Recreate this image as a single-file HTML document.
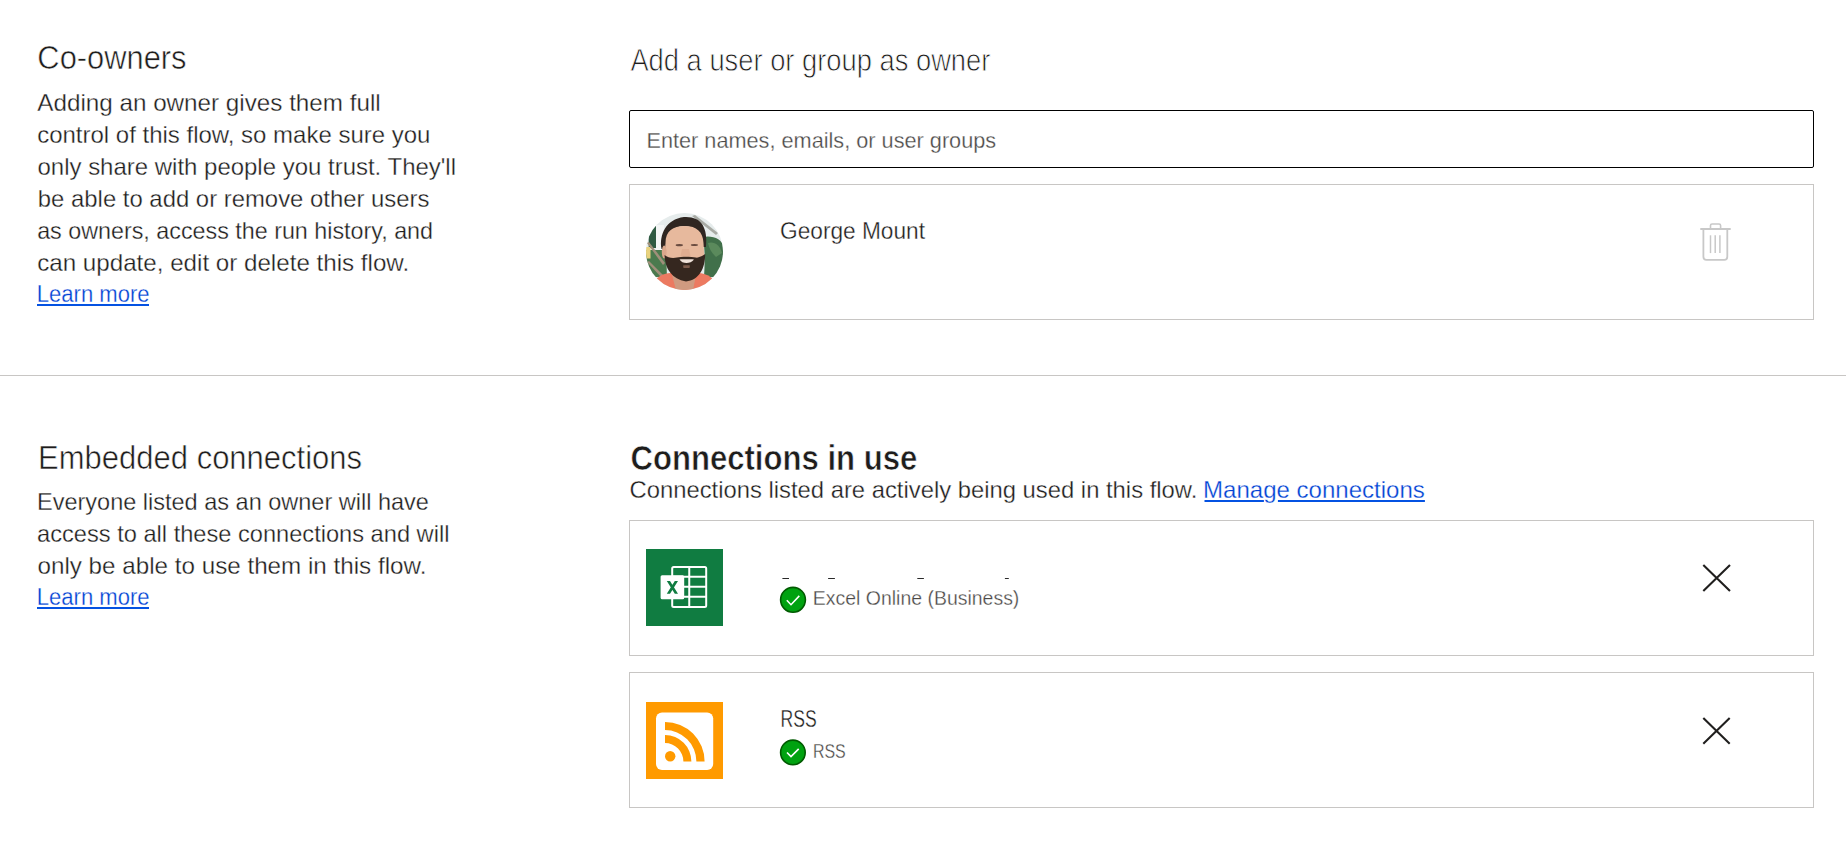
<!DOCTYPE html>
<html>
<head>
<meta charset="utf-8">
<style>
html,body{margin:0;padding:0;background:#ffffff;width:1846px;height:866px;overflow:hidden;}
body{position:relative;font-family:"Liberation Sans",sans-serif;}
.box{position:absolute;box-sizing:border-box;}
.sep{position:absolute;left:0;top:375px;width:1846px;height:1px;background:#c8c6c4;}
.input{left:629px;top:110px;width:1185px;height:58px;border:1px solid #000;border-radius:2px;}
.card{left:629px;width:1185px;height:136px;border:1px solid #c8c6c4;}
svg.layer{position:absolute;left:0;top:0;}
svg text{font-family:"Liberation Sans",sans-serif;white-space:pre;}
</style>
</head>
<body>
<div class="sep"></div>
<div class="box input"></div>
<div class="box card" style="top:184px"></div>
<div class="box card" style="top:520px"></div>
<div class="box card" style="top:672px"></div>
<svg class="layer" width="1846" height="866" viewBox="0 0 1846 866">
<defs>
<clipPath id="avc"><circle cx="38.5" cy="38.5" r="38.5"/></clipPath>
</defs>
<!-- avatar -->
<g transform="translate(646,213)">
<g clip-path="url(#avc)">
<rect x="0" y="0" width="77" height="77" fill="#e6ecec"/>
<rect x="2.7" y="13" width="8" height="22" fill="#2f5a42"/>
<rect x="10" y="12" width="8" height="26" fill="#f4f6f6"/>
<path d="M0,37 L20,37 L21,64 L8,64 L0,58 Z" fill="#4b7a4e"/>
<path d="M57,24 C66,22 77,26 77,34 L77,64 L58,64 C59,50 59,36 57,24 Z" fill="#41704a"/>
<path d="M62,30 C68,28 74,32 76,40 L70,44 C66,40 63,36 62,30 Z" fill="#5b8a5c"/>
<rect x="0" y="34" width="4.5" height="11.5" fill="#e9d27e"/>
<path d="M1,30 L3,29 L19,50 L17,52 Z" fill="#a08f7a"/>
<path d="M1,49 L3,48 L17,62 L15,64 Z" fill="#a08f7a"/>
<path d="M46,3 L49,2 L72,20 L70,22 Z" fill="#8d8f86" opacity="0.7"/>
<path d="M10,66 C14,62 20,60 24,60 L54,60 C60,61 64,63 67,66 L77,77 L0,77 Z" fill="#ec7a61"/>
<path d="M26,62 L50,62 L47,77 L30,77 Z" fill="#cf9a80"/>
<path d="M15.5,36 C13,22 20,6 38,4 C55,3 62,14 60,34 L56,34 C56,22 50,13 38,13 C26,13 20,22 19.5,36 Z" fill="#2f2621"/>
<path d="M19.5,30 C19.5,18 27,13 38.5,13 C51,13 57,19 57.5,30 L58.5,46 L19,46 Z" fill="#e7b99d"/>
<ellipse cx="18.2" cy="39" rx="2.4" ry="6.5" fill="#dba88c"/>
<path d="M36,36 L43,36 L44.5,43 L34.5,43 Z" fill="#dfad91"/>
<ellipse cx="33.3" cy="32.2" rx="3.6" ry="1.1" fill="#6a4c40"/>
<ellipse cx="48.4" cy="32" rx="3.6" ry="1.1" fill="#6a4c40"/>
<path d="M18.5,42 C19,56 26,66 40,68.5 C53,67 59,56 59.2,41 L56,43 C54,44 51,45 49.8,44.5 C45,43.5 35,43.5 31,44.5 C27,45.5 22,45 18.5,42 Z" fill="#35271f"/>
<path d="M33.5,46.5 C37,46.3 44,46.3 48,46.5 C46.5,49 43,50 40.5,50 C37.5,50 35,49 33.5,46.5 Z" fill="#efe2da"/>
<path d="M37,52.5 C39,52 42,52 44,52.5 L43.5,55 L37.5,55 Z" fill="#7d5c4c"/>
</g>
</g>
<!-- trash -->
<g fill="none" stroke="#c8c8c8" stroke-linecap="butt">
<line x1="1700.3" y1="229" x2="1730.7" y2="229" stroke-width="2"/>
<path d="M1710.5,229 V225.6 Q1710.5,224 1712.1,224 H1719 Q1720.6,224 1720.6,225.6 V229" stroke-width="1.6"/>
<path d="M1703.4,229 V256.8 Q1703.4,259.9 1706.5,259.9 H1724.2 Q1727.3,259.9 1727.3,256.8 V229" stroke-width="1.8"/>
<line x1="1710.5" y1="235.3" x2="1710.5" y2="253.1" stroke-width="1.5"/>
<line x1="1715.2" y1="235.3" x2="1715.2" y2="253.1" stroke-width="1.5"/>
<line x1="1719.9" y1="235.3" x2="1719.9" y2="253.1" stroke-width="1.5"/>
</g>
<!-- excel -->
<rect x="646" y="549" width="77" height="77" fill="#107c41"/>
<g fill="none" stroke="#ffffff" stroke-width="2">
<rect x="672.2" y="567" width="34" height="39.9" rx="1.5"/>
<line x1="689.25" y1="567" x2="689.25" y2="607"/>
<line x1="672" y1="576.8" x2="706" y2="576.8"/>
<line x1="672" y1="586.8" x2="706" y2="586.8"/>
<line x1="672" y1="596.8" x2="706" y2="596.8"/>
</g>
<rect x="660.6" y="575.2" width="23.6" height="24" rx="1.5" fill="#ffffff"/>
<path d="M666.8,581 L670,581 L678,593.7 L674.8,593.7 Z M674.8,581 L678,581 L670,593.7 L666.8,593.7 Z" fill="#107c41"/>
<!-- rss -->
<rect x="646" y="702" width="77" height="77" fill="#ff9a00"/>
<rect x="656" y="712.6" width="57.2" height="57.5" rx="6" fill="#ffffff"/>
<circle cx="670.2" cy="756.3" r="5.2" fill="#ff9a00"/>
<path d="M665,735.1 A26.4,26.4 0 0 1 691.4,761.5 L683.4,761.5 A18.4,18.4 0 0 0 665,743.1 Z" fill="#ff9a00"/>
<path d="M665,721.9 A39.6,39.6 0 0 1 704.6,761.5 L696.4,761.5 A31.4,31.4 0 0 0 665,730.1 Z" fill="#ff9a00"/>
<!-- checks -->
<circle cx="793" cy="599.8" r="12.4" fill="#00a210" stroke="#005a00" stroke-width="1.6"/>
<polyline points="786.8,600.2 791,604.7 799.3,595.9" fill="none" stroke="#ffffff" stroke-width="1.6"/>
<circle cx="792.9" cy="752.4" r="12.3" fill="#00a210" stroke="#005a00" stroke-width="1.6"/>
<polyline points="787,752.5 791,756.6 798.7,748.9" fill="none" stroke="#ffffff" stroke-width="1.6"/>
<!-- x icons -->
<g stroke="#201f1e" stroke-width="2.1" fill="none">
<path d="M1703.3,564.9 L1730,590.9 M1730,564.9 L1703.3,590.9"/>
<path d="M1703.3,718 L1729.7,743.7 M1729.7,718 L1703.3,743.7"/>
</g>
<!-- clipped text remnants -->
<g fill="#2a2a2a">
<rect x="782.4" y="578" width="6.6" height="1"/>
<rect x="828.1" y="578" width="6.8" height="1"/>
<rect x="917.3" y="578" width="6.6" height="1"/>
<rect x="1004.9" y="578" width="3.9" height="1"/>
</g>
<!-- texts -->
<text x="37.37" y="68.6" font-size="33" font-weight="400" fill="#1e1d1c" stroke="#fff" stroke-width="0.55" textLength="149.16" lengthAdjust="spacingAndGlyphs">Co-owners</text>
<text x="37.30" y="111" font-size="24" font-weight="400" fill="#1e1d1c" stroke="#fff" stroke-width="0.3" textLength="343.41" lengthAdjust="spacingAndGlyphs">Adding an owner gives them full</text>
<text x="37.20" y="143" font-size="24" font-weight="400" fill="#1e1d1c" stroke="#fff" stroke-width="0.3" textLength="393.21" lengthAdjust="spacingAndGlyphs">control of this flow, so make sure you</text>
<text x="37.50" y="175" font-size="24" font-weight="400" fill="#1e1d1c" stroke="#fff" stroke-width="0.3" textLength="418.53" lengthAdjust="spacingAndGlyphs">only share with people you trust. They&#39;ll</text>
<text x="37.85" y="207" font-size="24" font-weight="400" fill="#1e1d1c" stroke="#fff" stroke-width="0.3" textLength="391.60" lengthAdjust="spacingAndGlyphs">be able to add or remove other users</text>
<text x="37.13" y="239" font-size="24" font-weight="400" fill="#1e1d1c" stroke="#fff" stroke-width="0.3" textLength="395.91" lengthAdjust="spacingAndGlyphs">as owners, access the run history, and</text>
<text x="37.19" y="271" font-size="24" font-weight="400" fill="#1e1d1c" stroke="#fff" stroke-width="0.3" textLength="371.99" lengthAdjust="spacingAndGlyphs">can update, edit or delete this flow.</text>
<text x="36.82" y="301.9" font-size="23.5" font-weight="400" fill="#0042d4" stroke="#fff" stroke-width="0.3" textLength="112.79" lengthAdjust="spacingAndGlyphs">Learn more</text>
<rect x="37.0" y="304" width="112.0" height="2" fill="#0452e2"/>
<text x="38.12" y="468.8" font-size="33" font-weight="400" fill="#1e1d1c" stroke="#fff" stroke-width="0.55" textLength="323.93" lengthAdjust="spacingAndGlyphs">Embedded connections</text>
<text x="37.04" y="509.7" font-size="24" font-weight="400" fill="#1e1d1c" stroke="#fff" stroke-width="0.3" textLength="391.85" lengthAdjust="spacingAndGlyphs">Everyone listed as an owner will have</text>
<text x="37.12" y="541.7" font-size="24" font-weight="400" fill="#1e1d1c" stroke="#fff" stroke-width="0.3" textLength="412.28" lengthAdjust="spacingAndGlyphs">access to all these connections and will</text>
<text x="37.49" y="573.7" font-size="24" font-weight="400" fill="#1e1d1c" stroke="#fff" stroke-width="0.3" textLength="388.88" lengthAdjust="spacingAndGlyphs">only be able to use them in this flow.</text>
<text x="36.82" y="604.9" font-size="23.5" font-weight="400" fill="#0042d4" stroke="#fff" stroke-width="0.3" textLength="112.79" lengthAdjust="spacingAndGlyphs">Learn more</text>
<rect x="37.0" y="607" width="112.0" height="2" fill="#0452e2"/>
<text x="630.40" y="70.9" font-size="31" font-weight="400" fill="#1e1d1c" stroke="#fff" stroke-width="0.8" textLength="359.96" lengthAdjust="spacingAndGlyphs">Add a user or group as owner</text>
<text x="646.48" y="147.9" font-size="22.6" font-weight="400" fill="#4a4846" stroke="#fff" stroke-width="0.3" textLength="349.69" lengthAdjust="spacingAndGlyphs">Enter names, emails, or user groups</text>
<text x="780.01" y="238.7" font-size="23" font-weight="400" fill="#1e1d1c" stroke="#fff" stroke-width="0.3" textLength="145.02" lengthAdjust="spacingAndGlyphs">George Mount</text>
<text x="630.42" y="469.8" font-size="35.5" font-weight="700" fill="#1e1d1c" stroke="#fff" stroke-width="0.6" textLength="286.95" lengthAdjust="spacingAndGlyphs">Connections in use</text>
<text x="629.51" y="497.7" font-size="24" font-weight="400" fill="#1e1d1c" stroke="#fff" stroke-width="0.3" textLength="567.81" lengthAdjust="spacingAndGlyphs">Connections listed are actively being used in this flow.</text>
<text x="1203.00" y="497.7" font-size="24" font-weight="400" fill="#0042d4" stroke="#fff" stroke-width="0.3" textLength="221.89" lengthAdjust="spacingAndGlyphs">Manage connections</text>
<rect x="1204.5" y="500" width="59.4" height="2" fill="#0452e2"/>
<rect x="1277.9" y="500" width="147.0" height="2" fill="#0452e2"/>
<text x="812.87" y="604.7" font-size="21" font-weight="400" fill="#4a4846" stroke="#fff" stroke-width="0.3" textLength="206.48" lengthAdjust="spacingAndGlyphs">Excel Online (Business)</text>
<text x="780.57" y="726.7" font-size="23" font-weight="400" fill="#1e1d1c" stroke="#fff" stroke-width="0.3" textLength="36.16" lengthAdjust="spacingAndGlyphs">RSS</text>
<text x="812.94" y="757.8" font-size="21" font-weight="400" fill="#4a4846" stroke="#fff" stroke-width="0.3" textLength="32.80" lengthAdjust="spacingAndGlyphs">RSS</text>
</svg>
</body>
</html>
